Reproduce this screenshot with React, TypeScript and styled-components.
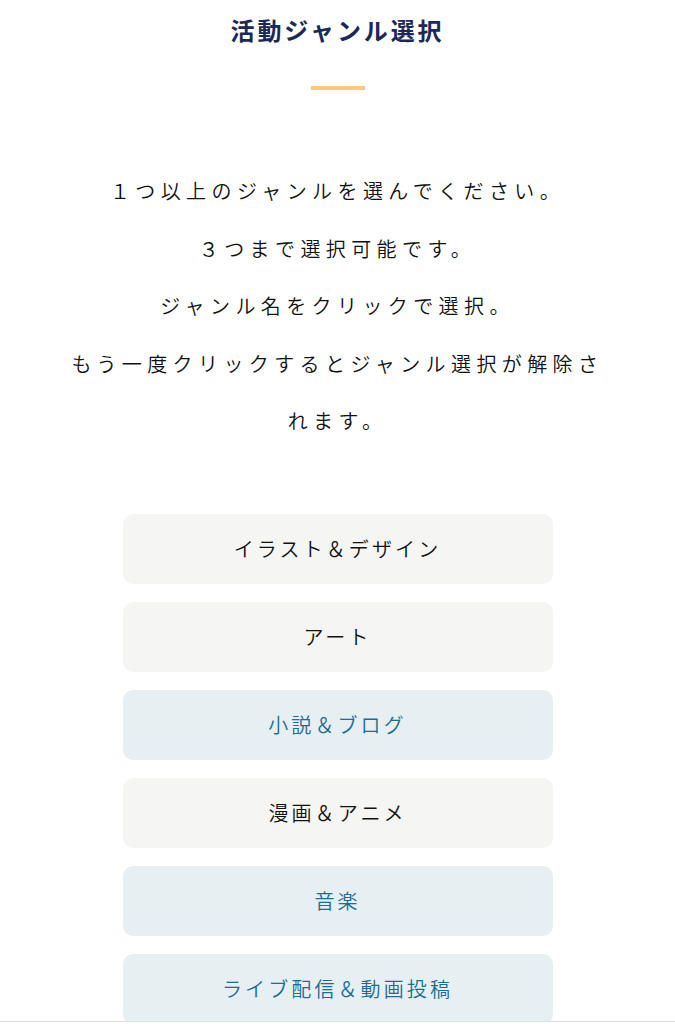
import React, { useState } from "react";
import styled, { createGlobalStyle } from "styled-components";

const GlobalStyle = createGlobalStyle`
  * {
    box-sizing: border-box;
  }
  body {
    margin: 0;
    background: #ffffff;
    font-family: "Noto Sans CJK JP", "Noto Sans", sans-serif;
    color: #111111;
  }
`;

const genres = [
  "イラスト＆デザイン",
  "アート",
  "小説＆ブログ",
  "漫画＆アニメ",
  "音楽",
  "ライブ配信＆動画投稿",
];

export default function App() {
  const [selected, setSelected] = useState<string[]>([
    "小説＆ブログ",
    "音楽",
    "ライブ配信＆動画投稿",
  ]);

  const toggle = (genre: string) => {
    setSelected((prev) => {
      if (prev.includes(genre)) return prev.filter((g) => g !== genre);
      if (prev.length >= 3) return prev;
      return [...prev, genre];
    });
  };

  return (
    <>
      <GlobalStyle />
      <Page>
        <Title>活動ジャンル選択</Title>
        <TitleBar />
        <Description>
          <p>１つ以上のジャンルを選んでください。</p>
          <p>３つまで選択可能です。</p>
          <p>ジャンル名をクリックで選択。</p>
          <p>もう一度クリックするとジャンル選択が解除されます。</p>
        </Description>
        <GenreList>
          {genres.map((genre) => (
            <GenreButton
              key={genre}
              $active={selected.includes(genre)}
              onClick={() => toggle(genre)}
            >
              {genre}
            </GenreButton>
          ))}
        </GenreList>
      </Page>
      <BottomBar />
    </>
  );
}

const Page = styled.div`
  display: flex;
  flex-direction: column;
  align-items: center;
  padding: 12px 0 40px;
`;

const Title = styled.h1`
  margin: 0;
  font-size: 24px;
  line-height: 36px;
  font-weight: 700;
  letter-spacing: 0.12em;
  color: #1c2858;
`;

const TitleBar = styled.div`
  width: 54px;
  height: 4px;
  margin-top: 38px;
  background: #fcc87c;
`;

const Description = styled.div`
  width: 540px;
  margin-top: 72px;
  text-align: center;
  font-size: 20px;
  font-weight: 350;
  line-height: 57.5px;
  letter-spacing: 0.27em;
  color: #111111;

  p {
    margin: 0;
  }
`;

const GenreList = styled.div`
  display: flex;
  flex-direction: column;
  gap: 18px;
  width: 430px;
  margin-top: 64px;
`;

const GenreButton = styled.button<{ $active: boolean }>`
  height: 70px;
  border: none;
  border-radius: 10px;
  font-family: inherit;
  font-size: 20px;
  font-weight: 350;
  letter-spacing: 0.155em;
  cursor: pointer;
  background: ${({ $active }) => ($active ? "#e6eff2" : "#f5f5f3")};
  color: ${({ $active }) => ($active ? "#1f6c93" : "#111111")};
`;

const BottomBar = styled.div`
  position: fixed;
  left: 0;
  right: 0;
  bottom: 0;
  height: 3px;
  background: #ffffff;
  border-top: 1px solid #dddddd;
`;
